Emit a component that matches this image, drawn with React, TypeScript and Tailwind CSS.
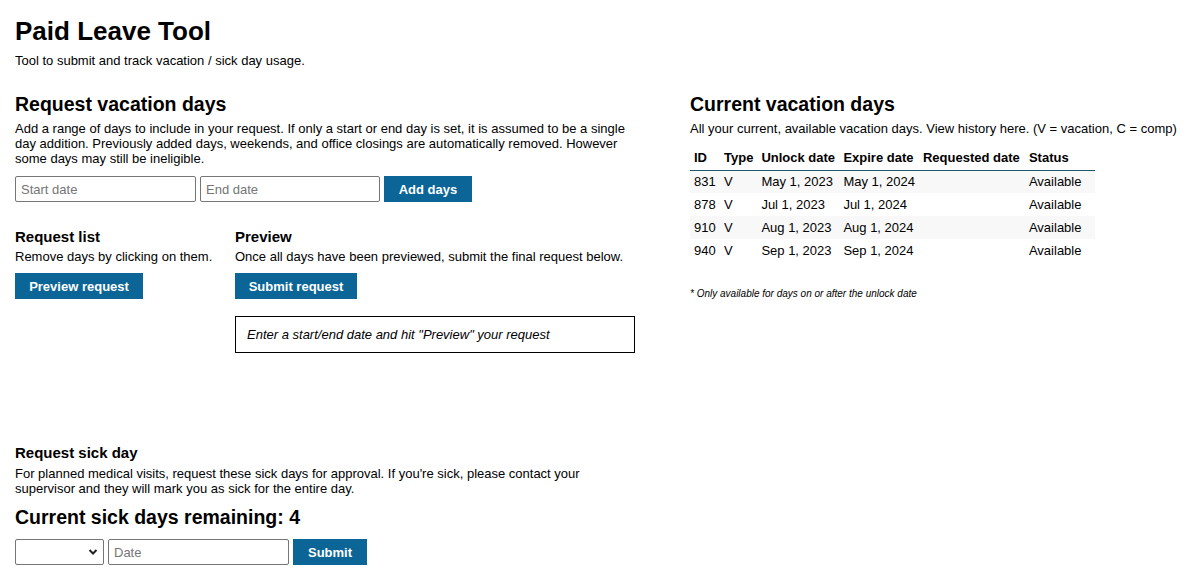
import React from "react";

// Data
const vacationDays = [
  { id: 831, type: "V", unlock: "May 1, 2023", expire: "May 1, 2024", requested: "", status: "Available" },
  { id: 878, type: "V", unlock: "Jul 1, 2023", expire: "Jul 1, 2024", requested: "", status: "Available" },
  { id: 910, type: "V", unlock: "Aug 1, 2023", expire: "Aug 1, 2024", requested: "", status: "Available" },
  { id: 940, type: "V", unlock: "Sep 1, 2023", expire: "Sep 1, 2024", requested: "", status: "Available" },
];

// Atomic Components
const Button = ({ label, width }: { label: string; width: string }) => (
  <button
    className={`${width} h-[26px] bg-[#0b6596] text-white text-[13px] font-bold leading-none`}
  >
    {label}
  </button>
);

const TextInput = ({ placeholder, width }: { placeholder: string; width: string }) => (
  <input
    placeholder={placeholder}
    className={`${width} h-[26px] border border-[#767676] rounded-[2px] px-[5px] text-[13px] placeholder:text-[#757575] outline-none`}
  />
);

const SectionTitle = ({ children }: { children: React.ReactNode }) => (
  <h2 className="text-[19.5px] font-bold leading-[22px] text-black">{children}</h2>
);

const SubTitle = ({ children }: { children: React.ReactNode }) => (
  <h4 className="text-[15px] font-bold leading-[17px] text-black">{children}</h4>
);

const VacationRequest = () => (
  <section>
    <SectionTitle>Request vacation days</SectionTitle>
    <p className="mt-[6px] w-[620px] text-[13px] leading-[15px]">
      Add a range of days to include in your request. If only a start or end day is set, it is assumed to be a single
      day addition. Previously added days, weekends, and office closings are automatically removed. However
      some days may still be ineligible.
    </p>
    <div className="mt-[10px] flex gap-[4px]">
      <TextInput placeholder="Start date" width="w-[181px]" />
      <TextInput placeholder="End date" width="w-[180px]" />
      <Button label="Add days" width="w-[88px]" />
    </div>

    <div className="mt-[26px] flex gap-[22px]">
      <div className="w-[198px]">
        <SubTitle>Request list</SubTitle>
        <p className="mt-[4px] text-[13px] leading-[15px] whitespace-nowrap">Remove days by clicking on them.</p>
        <div className="mt-[9px]">
          <Button label="Preview request" width="w-[128px]" />
        </div>
      </div>
      <div>
        <SubTitle>Preview</SubTitle>
        <p className="mt-[4px] text-[13px] leading-[15px] whitespace-nowrap">
          Once all days have been previewed, submit the final request below.
        </p>
        <div className="mt-[9px]">
          <Button label="Submit request" width="w-[122px]" />
        </div>
        <div className="mt-[17px] w-[400px] h-[37px] border border-black flex items-center px-[11px]">
          <span className="text-[13px] italic">Enter a start/end date and hit "Preview" your request</span>
        </div>
      </div>
    </div>
  </section>
);

const SickDayRequest = () => (
  <section>
    <SubTitle>Request sick day</SubTitle>
    <p className="mt-[5px] w-[600px] text-[13px] leading-[15px]">
      For planned medical visits, request these sick days for approval. If you're sick, please contact your
      supervisor and they will mark you as sick for the entire day.
    </p>
    <h2 className="mt-[10px] text-[19.5px] font-bold leading-[22px]">Current sick days remaining: 4</h2>
    <div className="mt-[11px] flex gap-[4px]">
      <div className="relative w-[89px] h-[26px] border border-[#767676] rounded-[2px]">
        <select className="w-full h-full appearance-none bg-transparent outline-none" />
        <svg
          className="absolute right-[5px] top-[8px] pointer-events-none"
          width="10"
          height="8"
          viewBox="0 0 10 8"
        >
          <path d="M1.5 2 L5 5.5 L8.5 2" fill="none" stroke="#222" strokeWidth="2" />
        </svg>
      </div>
      <TextInput placeholder="Date" width="w-[181px]" />
      <Button label="Submit" width="w-[74px]" />
    </div>
  </section>
);

const VacationTable = () => (
  <section>
    <SectionTitle>Current vacation days</SectionTitle>
    <p className="mt-[6px] text-[13px] leading-[15px] whitespace-nowrap">
      All your current, available vacation days. View history here. (V = vacation, C = comp)
    </p>
    <table className="mt-[10px] w-[405px] text-[13px] border-collapse whitespace-nowrap">
      <thead>
        <tr className="border-b border-[#1b5868] text-left">
          <th className="w-[30px] px-[4px] h-[24px] font-bold">ID</th>
          <th className="w-[37px] px-[4px] font-bold">Type</th>
          <th className="w-[82px] px-[4px] font-bold">Unlock date</th>
          <th className="w-[79px] px-[4px] font-bold">Expire date</th>
          <th className="w-[106px] px-[4px] font-bold">Requested date</th>
          <th className="px-[4px] font-bold">Status</th>
        </tr>
      </thead>
      <tbody>
        {vacationDays.map((row, i) => (
          <tr key={row.id} className={`h-[23px] ${i % 2 === 0 ? "bg-[#f8f8f8]" : "bg-white"}`}>
            <td className="px-[4px]">{row.id}</td>
            <td className="px-[4px]">{row.type}</td>
            <td className="px-[4px]">{row.unlock}</td>
            <td className="px-[4px]">{row.expire}</td>
            <td className="px-[4px]">{row.requested}</td>
            <td className="px-[4px]">{row.status}</td>
          </tr>
        ))}
      </tbody>
    </table>
    <p className="mt-[24px] text-[10px] italic">* Only available for days on or after the unlock date</p>
  </section>
);

// Main Component
export default function App() {
  return (
    <div className="min-h-[582px] bg-white text-black px-[15px] pt-[16px] font-['Liberation_Sans',Arial,sans-serif]">
      <h1 className="text-[26px] font-bold leading-[30px]">Paid Leave Tool</h1>
      <p className="mt-[7px] text-[13px] leading-[15px]">Tool to submit and track vacation / sick day usage.</p>

      <div className="mt-[25px] flex">
        <div className="w-[675px] shrink-0">
          <VacationRequest />
        </div>
        <VacationTable />
      </div>

      <div className="mt-[91px]">
        <SickDayRequest />
      </div>
    </div>
  );
}
